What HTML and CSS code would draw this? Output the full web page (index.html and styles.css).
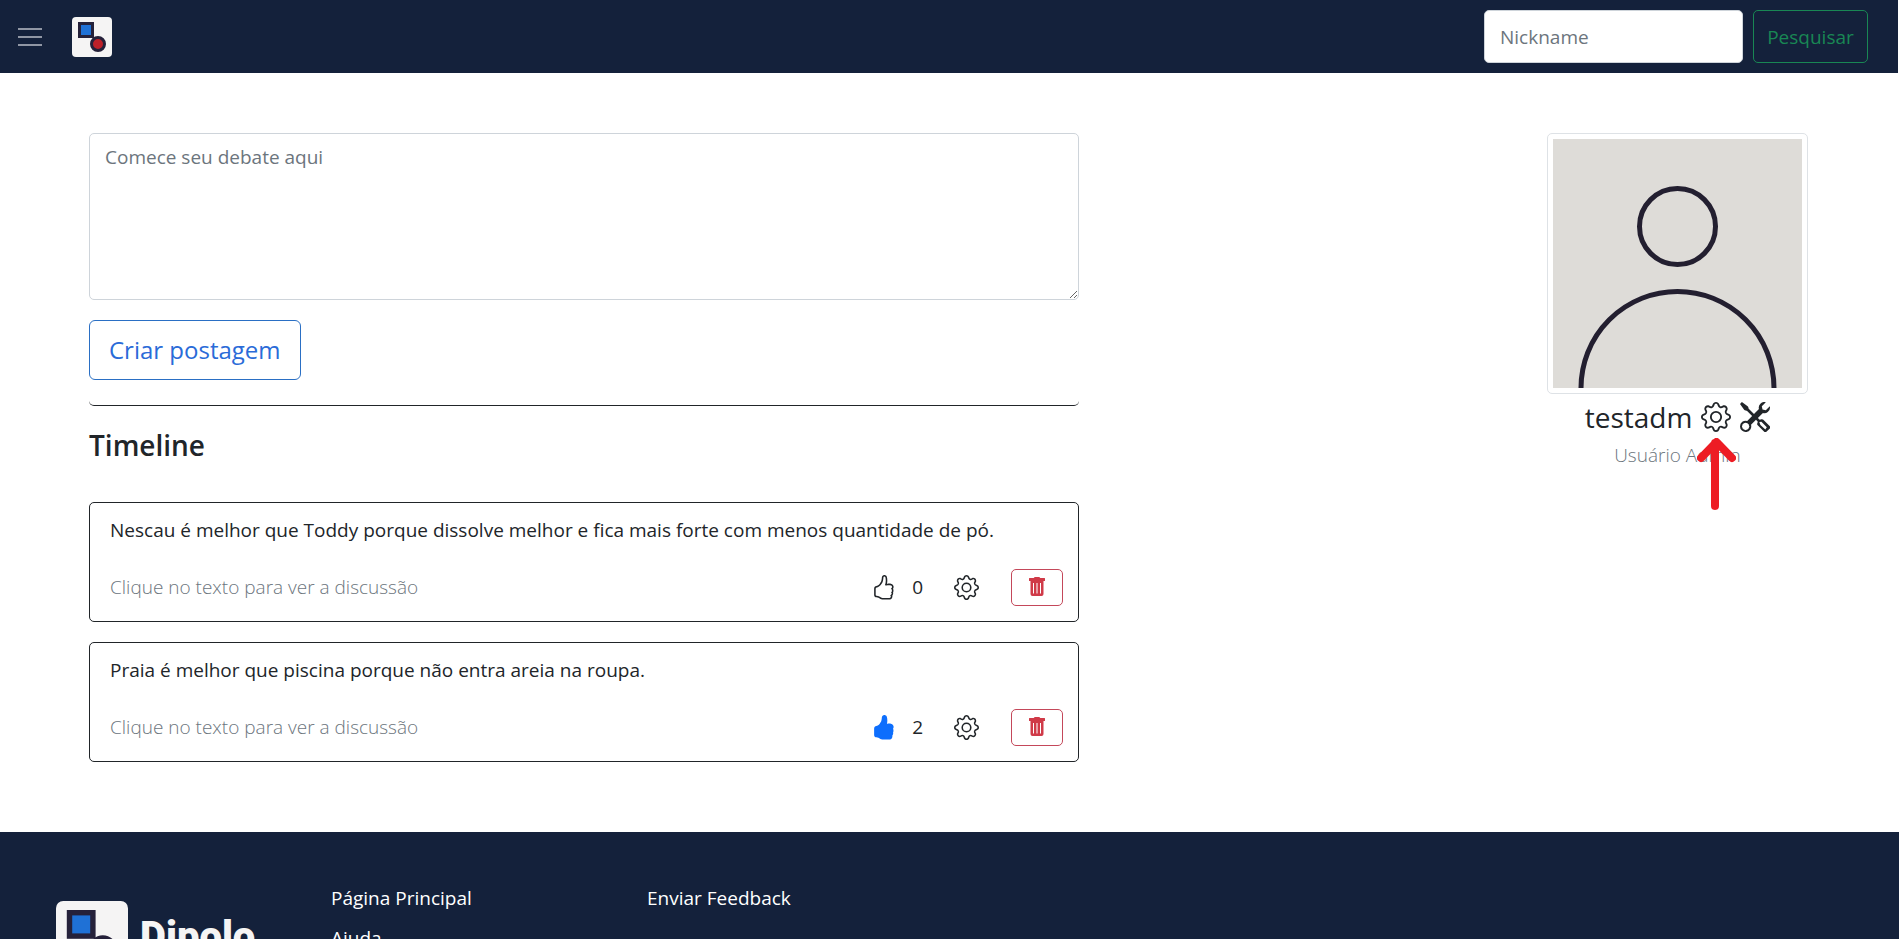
FILE: index.html
```html
<!DOCTYPE html>
<html lang="pt-br">
<head>
<meta charset="utf-8">
<title>Dipolo</title>
<link rel="stylesheet" href="styles.css">
</head>
<body>
<svg class="sprite" aria-hidden="true">
  <symbol id="gear" viewBox="0 0 16 16">
    <path d="M8 4.754a3.246 3.246 0 1 0 0 6.492 3.246 3.246 0 0 0 0-6.492zM5.754 8a2.246 2.246 0 1 1 4.492 0 2.246 2.246 0 0 1-4.492 0z"/>
    <path d="M9.796 1.343c-.527-1.79-3.065-1.79-3.592 0l-.094.319a.873.873 0 0 1-1.255.52l-.292-.16c-1.64-.892-3.433.902-2.54 2.541l.159.292a.873.873 0 0 1-.52 1.255l-.319.094c-1.79.527-1.79 3.065 0 3.592l.319.094a.873.873 0 0 1 .52 1.255l-.16.292c-.892 1.64.901 3.434 2.541 2.54l.292-.159a.873.873 0 0 1 1.255.52l.094.319c.527 1.79 3.065 1.79 3.592 0l.094-.319a.873.873 0 0 1 1.255-.52l.292.16c1.64.893 3.434-.902 2.54-2.541l-.159-.292a.873.873 0 0 1 .52-1.255l.319-.094c1.79-.527 1.79-3.065 0-3.592l-.319-.094a.873.873 0 0 1-.52-1.255l.16-.292c.893-1.64-.902-3.433-2.541-2.54l-.292.159a.873.873 0 0 1-1.255-.52l-.094-.319zm-2.633.283c.246-.835 1.428-.835 1.674 0l.094.319a1.873 1.873 0 0 0 2.693 1.115l.291-.16c.764-.415 1.6.42 1.184 1.185l-.159.292a1.873 1.873 0 0 0 1.116 2.692l.318.094c.835.246.835 1.428 0 1.674l-.319.094a1.873 1.873 0 0 0-1.115 2.693l.16.291c.415.764-.42 1.6-1.185 1.184l-.291-.159a1.873 1.873 0 0 0-2.693 1.116l-.094.318c-.246.835-1.428.835-1.674 0l-.094-.319a1.873 1.873 0 0 0-2.692-1.115l-.292.16c-.764.415-1.6-.42-1.184-1.185l.159-.291A1.873 1.873 0 0 0 1.945 8.93l-.319-.094c-.835-.246-.835-1.428 0-1.674l.319-.094A1.873 1.873 0 0 0 3.06 4.377l-.16-.292c-.415-.764.42-1.6 1.185-1.184l.292.159a1.873 1.873 0 0 0 2.692-1.115l.094-.319z"/>
  </symbol>
  <symbol id="tools" viewBox="0 0 16 16">
    <path fill-rule="evenodd" d="M1 0L0 1l2.2 3.081a1 1 0 0 0 .815.419h.07a1 1 0 0 1 .708.293l2.675 2.675-2.617 2.654A3.003 3.003 0 0 0 0 13a3 3 0 1 0 5.878-.851l2.654-2.617.968.968-.305.914a1 1 0 0 0 .242 1.023l3.356 3.356a1 1 0 0 0 1.414 0l1.586-1.586a1 1 0 0 0 0-1.414l-3.356-3.356a1 1 0 0 0-1.023-.242L10.5 9.5l-.96-.96 2.68-2.643A3.005 3.005 0 0 0 16 3c0-.269-.035-.53-.102-.777l-2.14 2.141L12 4l-.364-1.757L13.777.102a3 3 0 0 0-3.675 3.68L7.462 6.46 4.793 3.793a1 1 0 0 1-.293-.707v-.071a1 1 0 0 0-.419-.814L1 0zM10.300 10.700L11.400 10.500L14.300 13.400L13.500 14.600L10.900 12.200zM3 11l.471.242.529.026.287.445.445.287.026.529L5 13l-.242.471-.026.529-.445.287-.287.445-.529.026L3 15l-.471-.242L2 14.732l-.287-.445L1.268 14l-.026-.529L1 13l.242-.471.026-.529.445-.287.287-.445.529-.026L3 11z"/>
  </symbol>
  <symbol id="thumb" viewBox="0 0 16 16">
    <path d="M8.864.046C7.908-.193 7.02.53 6.956 1.466c-.072 1.051-.23 2.016-.428 2.59-.125.36-.479 1.013-1.04 1.639-.557.623-1.282 1.178-2.131 1.41C2.685 7.288 2 7.87 2 8.72v4.001c0 .845.682 1.464 1.448 1.545 1.07.114 1.564.415 2.068.723l.048.03c.272.165.578.348.97.484.397.136.861.217 1.466.217h3.5c.937 0 1.599-.477 1.934-1.064a1.86 1.86 0 0 0 .254-.912c0-.152-.023-.312-.077-.464.201-.263.38-.578.488-.901.11-.33.172-.762.004-1.149.069-.13.12-.269.159-.403.077-.27.113-.568.113-.857 0-.288-.036-.585-.113-.856a2.144 2.144 0 0 0-.138-.362 1.9 1.9 0 0 0 .234-1.734c-.206-.592-.682-1.1-1.2-1.272-.847-.282-1.803-.276-2.516-.211a9.84 9.84 0 0 0-.443.05 9.365 9.365 0 0 0-.062-4.509A1.38 1.38 0 0 0 9.125.111L8.864.046zM11.5 14.721H8c-.51 0-.863-.069-1.14-.164-.281-.097-.506-.228-.776-.393l-.04-.024c-.555-.339-1.198-.731-2.49-.868-.333-.036-.554-.29-.554-.55V8.72c0-.254.226-.543.62-.65 1.095-.3 1.977-.996 2.614-1.708.635-.71 1.064-1.475 1.238-1.978.243-.7.407-1.768.482-2.85.025-.362.36-.594.667-.518l.262.066c.16.04.258.143.288.255a8.34 8.34 0 0 1-.145 4.725.5.5 0 0 0 .595.644l.003-.001.014-.003.058-.014a8.908 8.908 0 0 1 1.036-.157c.663-.06 1.457-.054 2.11.164.175.058.45.3.57.65.107.308.087.67-.266 1.022l-.353.353.353.354c.043.043.105.141.154.315.048.167.075.37.075.581 0 .212-.027.414-.075.582-.05.174-.111.272-.154.315l-.353.353.353.354c.047.047.109.177.005.488a2.224 2.224 0 0 1-.505.805l-.353.353.353.354c.006.005.041.05.041.17a.866.866 0 0 1-.121.416c-.165.288-.503.56-1.066.56z"/>
  </symbol>
  <symbol id="thumb-fill" viewBox="0 0 16 16">
    <path d="M8.864.046C7.908-.193 7.02.53 6.956 1.466c-.072 1.051-.23 2.016-.428 2.59-.125.36-.479 1.013-1.04 1.639-.557.623-1.282 1.178-2.131 1.41C2.685 7.288 2 7.87 2 8.72v4.001c0 .845.682 1.464 1.448 1.545 1.07.114 1.564.415 2.068.723l.048.03c.272.165.578.348.97.484.397.136.861.217 1.466.217h3.5c.937 0 1.599-.477 1.934-1.064a1.86 1.86 0 0 0 .254-.912c0-.152-.023-.312-.077-.464.201-.263.38-.578.488-.901.11-.33.172-.762.004-1.149.069-.13.12-.269.159-.403.077-.27.113-.568.113-.857 0-.288-.036-.585-.113-.856a2.144 2.144 0 0 0-.138-.362 1.9 1.9 0 0 0 .234-1.734c-.206-.592-.682-1.1-1.2-1.272-.847-.282-1.803-.276-2.516-.211a9.84 9.84 0 0 0-.443.05 9.365 9.365 0 0 0-.062-4.509A1.38 1.38 0 0 0 9.125.111L8.864.046z"/>
  </symbol>
  <symbol id="trash" viewBox="0 0 16 19">
    <path fill-rule="evenodd" d="M5 .8Q5.200 0 6 0h4Q10.800 0 11 .8L11.300 1H15.500a.5.5 0 0 1 .5.5V4H14.500v13a2 2 0 0 1-2 2h-9a2 2 0 0 1-2-2V4H0V1.500a.5.5 0 0 1 .5-.5H4.700zM4 6v10.500h1V6zM7.500 6v10.500h1V6zM11 6v10.500h1V6z"/>
  </symbol>
  <symbol id="mark" viewBox="0 0 40 40">
    <rect width="40" height="40" rx="4" fill="#f5f4f4"/>
    <rect x="7.500" y="6.500" width="13" height="13" fill="#1f71d6" stroke="#25213a" stroke-width="3"/>
    <circle cx="26" cy="27" r="6.500" fill="#bd2029" stroke="#25213a" stroke-width="3"/>
  </symbol>
</svg>

<header class="navbar">
  <button class="menu" type="button" aria-label="Menu">
    <svg viewBox="0 0 30 30" width="30" height="30"><path stroke="currentColor" stroke-miterlimit="10" stroke-width="2" d="M3 7h24M3 15h24M3 23h24"/></svg>
  </button>
  <a class="brand" href="#" aria-label="Dipolo"><svg width="40" height="40"><use href="#mark"/></svg></a>
  <form class="search">
    <input class="search-box" type="search" placeholder="Nickname" aria-label="Nickname">
    <button class="btn btn-search" type="button">Pesquisar</button>
  </form>
</header>

<main class="page">
  <section class="feed">
    <form class="composer">
      <textarea class="composer-text" placeholder="Comece seu debate aqui" aria-label="Comece seu debate aqui"></textarea>
      <button class="btn btn-create" type="button">Criar postagem</button>
    </form>
    <div class="divider"></div>
    <h1 class="title">Timeline</h1>
    <article class="post">
      <p class="post-text">Nescau é melhor que Toddy porque dissolve melhor e fica mais forte com menos quantidade de pó.</p>
      <div class="post-foot">
        <span class="hint">Clique no texto para ver a discussão</span>
        <button class="icon-btn" type="button" aria-label="Curtir"><svg class="icon"><use href="#thumb"/></svg></button>
        <span class="count">0</span>
        <button class="icon-btn gear" type="button" aria-label="Configurar"><svg class="icon"><use href="#gear"/></svg></button>
        <button class="btn btn-delete" type="button" aria-label="Excluir"><svg class="trash"><use href="#trash"/></svg></button>
      </div>
    </article>
    <article class="post">
      <p class="post-text">Praia é melhor que piscina porque não entra areia na roupa.</p>
      <div class="post-foot">
        <span class="hint">Clique no texto para ver a discussão</span>
        <button class="icon-btn liked" type="button" aria-label="Descurtir"><svg class="icon"><use href="#thumb-fill"/></svg></button>
        <span class="count">2</span>
        <button class="icon-btn gear" type="button" aria-label="Configurar"><svg class="icon"><use href="#gear"/></svg></button>
        <button class="btn btn-delete" type="button" aria-label="Excluir"><svg class="trash"><use href="#trash"/></svg></button>
      </div>
    </article>
  </section>

  <aside class="profile">
    <div class="avatar">
      <svg viewBox="0 0 249 249">
        <rect width="249" height="249" fill="#dedcd8"/>
        <g fill="none" stroke="#231f30" stroke-width="5">
          <circle cx="124.500" cy="87.500" r="38"/>
          <circle cx="124.500" cy="249" r="96.500"/>
        </g>
      </svg>
    </div>
    <div class="user">
      <span class="name">testadm</span>
      <a class="user-link" href="#" aria-label="Configurações"><svg class="icon-lg"><use href="#gear"/></svg>
        <svg class="arrow" viewBox="0 0 39 72" aria-hidden="true"><path d="M18 68V5M4 20L19.500 4L35 20" fill="none" stroke="#ed1c24" stroke-width="8" stroke-linecap="round" stroke-linejoin="round"/></svg>
      </a>
      <a class="user-link" href="#" aria-label="Administração"><svg class="icon-lg"><use href="#tools"/></svg></a>
    </div>
    <p class="role">Usuário Admin</p>
  </aside>
</main>

<footer class="footer">
  <div class="footer-brand"><svg width="72" height="72"><use href="#mark"/></svg><span class="wordmark">Dipolo</span></div>
  <nav class="links">
    <a href="#">Página Principal</a>
    <a href="#">Ajuda</a>
  </nav>
  <nav class="links">
    <a href="#">Enviar Feedback</a>
  </nav>
</footer>
</body>
</html>
```

FILE: styles.css
```css
* { box-sizing: border-box; }

html, body { height: 100%; }

body {
  margin: 0;
  display: flex;
  flex-direction: column;
  overflow: hidden;
  background: #fff;
  color: #212529;
  font-family: "Open Sans", "Noto Sans", sans-serif;
  font-size: 19px;
  line-height: 30px;
}

button, input, textarea { font: inherit; }

a { color: inherit; text-decoration: none; }

svg { display: block; fill: currentColor; }

.sprite { position: absolute; width: 0; height: 0; }

.navbar {
  flex: none;
  display: flex;
  align-items: center;
  padding: 10px 30px 10px 15px;
  margin-right: 1px;
  background: #14213b;
}

.menu {
  padding: 0;
  border: 0;
  background: none;
  color: #9096a4;
}

.brand { margin-left: 27px; }

.search {
  display: flex;
  gap: 10px;
  margin-left: auto;
}

.search-box {
  width: 259px;
  height: 53px;
  padding: 0 15px;
  border: 1px solid #ced4da;
  border-radius: 5px;
  background: #fff;
  color: #212529;
}

.search-box::placeholder,
.composer-text::placeholder { color: #6c757d; opacity: 1; }

.btn {
  border: 1px solid;
  border-radius: 5px;
  background: none;
}

.btn-search { width: 115px; padding: 0; color: #198754; }

.page {
  flex: none;
  display: flex;
  justify-content: space-between;
  align-items: flex-start;
  padding: 60px 91px 50px 89px;
}

.feed { flex: 0 1 990px; }

.composer-text {
  display: block;
  width: 100%;
  height: 167px;
  padding: 8px 15px;
  border: 1px solid #ced4da;
  border-radius: 5px;
  resize: vertical;
}

.btn-create {
  height: 60px;
  margin-top: 20px;
  padding: 0 19px;
  border-color: #2a6fc4;
  border-radius: 6px;
  color: #2a6bd8;
  font-size: 24px;
}

.divider {
  height: 6px;
  margin-top: 20px;
  border-bottom: 1px solid #212529;
  border-radius: 0 0 5px 5px;
}

.title {
  margin: 21px 0 39px;
  font-size: 28px;
  font-weight: 600;
  line-height: 36px;
}

.post {
  margin-bottom: 20px;
  padding: 12px 15px 15px 20px;
  border: 1px solid #212529;
  border-radius: 5px;
}

.post-text { margin: 0 0 23px; }

.post-foot { display: flex; align-items: center; height: 38px; }

.hint { margin-right: auto; color: #6c757d; font-weight: 300; }

.icon-btn { padding: 0; border: 0; background: none; color: #212529; }

.icon { width: 25px; height: 25px; }

.liked { color: #0d6efd; }

.count { margin: 0 31px 0 16px; }

.gear { margin-right: 32px; }

.btn-delete {
  display: flex;
  justify-content: center;
  align-items: center;
  width: 52px;
  height: 37px;
  padding: 0 0 2px;
  border-color: #c4485a;
  color: #d03a48;
}

.trash { width: 16px; height: 19px; }

.profile { flex: none; width: 261px; text-align: center; }

.avatar {
  padding: 5px;
  border: 1px solid #dee2e6;
  border-radius: 5px;
}

.user {
  display: flex;
  justify-content: center;
  align-items: center;
  gap: 9px;
  height: 46px;
}

.name { font-size: 28px; }

.user-link { position: relative; }

.icon-lg { width: 30px; height: 30px; }

.arrow {
  position: absolute;
  top: 36px;
  left: -4px;
  width: 39px;
  height: 72px;
}

.role { margin: 0; color: #6c757d; font-weight: 300; }

.footer {
  flex: none;
  display: flex;
  align-items: flex-start;
  padding: 0 0 60px 56px;
  background: #14213b;
  color: #fff;
}

.footer-brand {
  display: flex;
  align-items: center;
  gap: 12px;
  width: 275px;
  padding-top: 69px;
}

.wordmark {
  color: #f5f4f4;
  font-family: Roboto, sans-serif;
  font-size: 40px;
  font-weight: 900;
}

.links {
  display: flex;
  flex-direction: column;
  gap: 10px;
  width: 316px;
  padding-top: 51px;
}
```
